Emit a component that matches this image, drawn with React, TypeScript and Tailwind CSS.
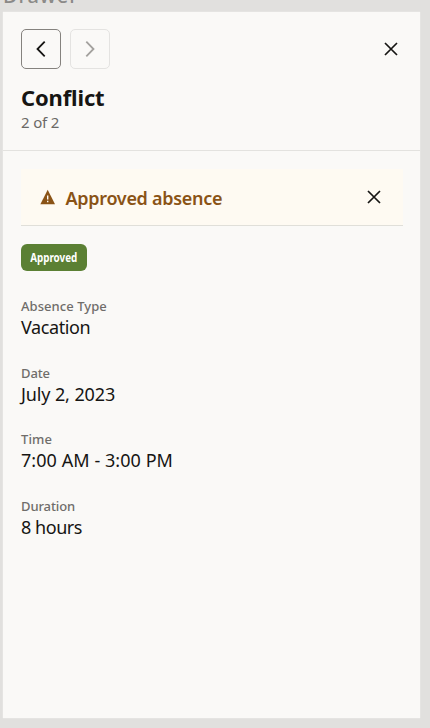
import type { ReactNode } from "react";

const details = [
  { label: "Absence Type", value: "Vacation", labelClass: "tracking-[0.05px]", valueClass: "tracking-[-0.4px]" },
  { label: "Date", value: "July 2, 2023", labelClass: "tracking-[-0.1px]", valueClass: "tracking-[-0.12px]" },
  { label: "Time", value: "7:00 AM - 3:00 PM", labelClass: "tracking-[0.15px]", valueClass: "tracking-[0.06px]" },
  { label: "Duration", value: "8 hours", labelClass: "tracking-[-0.1px]", valueClass: "tracking-[-0.45px]" },
];

function CloseIcon() {
  return (
    <svg width="14" height="14" viewBox="0 0 14 14" fill="none" stroke="#161513" strokeWidth="1.7">
      <path d="M1 1l12 12M13 1L1 13" />
    </svg>
  );
}

function ChevronIcon({ flip = false }: { flip?: boolean }) {
  return (
    <svg
      width="10"
      height="16"
      viewBox="0 0 10 16"
      fill="none"
      stroke="currentColor"
      strokeWidth="1.8"
      className={flip ? "rotate-180" : ""}
    >
      <path d="M8.7 0.7L1.5 8l7.2 7.3" />
    </svg>
  );
}

function WarningIcon() {
  return (
    <svg width="16" height="16" viewBox="0 0 16 16">
      <path d="M7.7 0.7L15 15.3H0.4z" fill="#8a5316" />
      <path d="M7 6.6h1.4v3.8H7zM7 11.8h1.4v1.4H7z" fill="#fefaf2" />
    </svg>
  );
}

function NavButton({ label, disabled, children }: { label: string; disabled?: boolean; children: ReactNode }) {
  return (
    <button
      type="button"
      aria-label={label}
      disabled={disabled}
      className="flex size-10 items-center justify-center rounded-[5px] border border-[#85827e] text-[#161513] disabled:border-[#e4e3e1] disabled:text-[#a3a19e]"
    >
      {children}
    </button>
  );
}

export default function App() {
  return (
    <div className="flex h-[728px] w-[430px] flex-col overflow-hidden bg-[#e1e0de] font-['Noto_Sans',sans-serif] text-[#161513]">
      <div className="flex h-3 shrink-0 items-end pb-[3px] pl-[3px]">
        <span className="text-[20px] leading-[26px] font-medium tracking-[0.9px] text-[#8b8a88]">Drawer</span>
      </div>
      <section className="ml-[3px] h-[706px] w-[417px] bg-[#faf9f7] shadow-[0_0_1px_rgba(255,255,255,0.8)]">
        <header className="h-[139px] border-b border-[#e3e2df] px-[18px] pt-[17px]">
          <div className="flex items-center justify-between">
            <div className="flex gap-[9px]">
              <NavButton label="Previous">
                <ChevronIcon />
              </NavButton>
              <NavButton label="Next" disabled>
                <ChevronIcon flip />
              </NavButton>
            </div>
            <button type="button" aria-label="Close drawer" className="mr-[4px]">
              <CloseIcon />
            </button>
          </div>
          <h1 className="mt-[14px] text-[22px] leading-7 font-bold tracking-[-0.15px]">Conflict</h1>
          <p className="mt-px text-[15px] leading-5 tracking-[-0.15px] text-[#6b6966]">2 of 2</p>
        </header>
        <main className="px-[18px] pt-[18px]">
          <div className="flex h-[57px] w-[382px] items-center border-b border-[#e0dfd9] bg-[#fefaf2] pr-[22px] pl-[19px] text-[#8a5316]">
            <WarningIcon />
            <h2 className="mt-px ml-[9.5px] flex-1 text-[18px] leading-6 font-semibold tracking-[-0.3px]">
              Approved absence
            </h2>
            <button type="button" aria-label="Dismiss">
              <CloseIcon />
            </button>
          </div>
          <div className="mt-[18px] flex h-[27px] w-[66px] items-center justify-center rounded-md bg-[#5b8034] text-[12px] font-bold text-white">
            <span className="scale-x-[0.82]">Approved</span>
          </div>
          <dl className="mt-[25px] flex flex-col gap-[26.7px]">
            {details.map((item) => (
              <div key={item.label}>
                <dt className={`text-[13px] leading-5 font-medium text-[#6f6d6a] ${item.labelClass}`}>{item.label}</dt>
                <dd className={`-mb-px pt-px text-[18px] leading-5 ${item.valueClass}`}>{item.value}</dd>
              </div>
            ))}
          </dl>
        </main>
      </section>
    </div>
  );
}
